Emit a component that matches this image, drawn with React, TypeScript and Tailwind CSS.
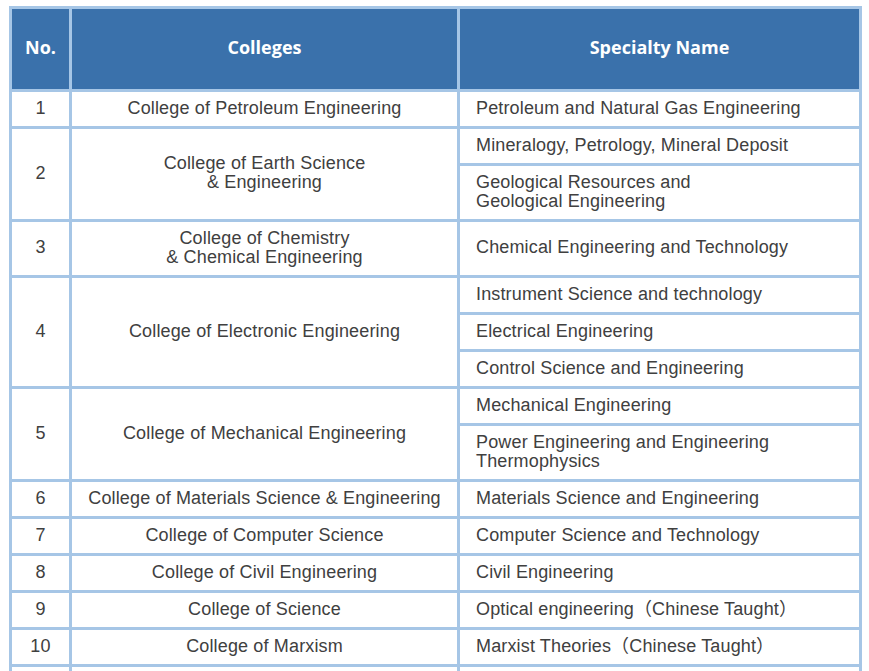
import React from "react";

type Row = { no: string; college: string[]; specs: { lines: string[]; h: number }[] };

const rows: Row[] = [
  { no: "1", college: ["College of Petroleum Engineering"], specs: [{ lines: ["Petroleum and Natural Gas Engineering"], h: 37 }] },
  {
    no: "2",
    college: ["College of Earth Science", "& Engineering"],
    specs: [
      { lines: ["Mineralogy, Petrology, Mineral Deposit"], h: 37 },
      { lines: ["Geological Resources and", "Geological Engineering"], h: 56 },
    ],
  },
  { no: "3", college: ["College of Chemistry", "& Chemical Engineering"], specs: [{ lines: ["Chemical Engineering and Technology"], h: 56 }] },
  {
    no: "4",
    college: ["College of Electronic Engineering"],
    specs: [
      { lines: ["Instrument Science and technology"], h: 37 },
      { lines: ["Electrical Engineering"], h: 37 },
      { lines: ["Control Science and Engineering"], h: 37 },
    ],
  },
  {
    no: "5",
    college: ["College of Mechanical Engineering"],
    specs: [
      { lines: ["Mechanical Engineering"], h: 37 },
      { lines: ["Power Engineering and Engineering", "Thermophysics"], h: 56 },
    ],
  },
  { no: "6", college: ["College of Materials Science & Engineering"], specs: [{ lines: ["Materials Science and Engineering"], h: 37 }] },
  { no: "7", college: ["College of Computer Science"], specs: [{ lines: ["Computer Science and Technology"], h: 37 }] },
  { no: "8", college: ["College of Civil Engineering"], specs: [{ lines: ["Civil Engineering"], h: 37 }] },
  { no: "9", college: ["College of Science"], specs: [{ lines: ["Optical engineering（Chinese Taught）"], h: 37 }] },
  { no: "10", college: ["College of Marxism"], specs: [{ lines: ["Marxist Theories（Chinese Taught）"], h: 37 }] },
  { no: "", college: [""], specs: [{ lines: [""], h: 37 }] },
];

const cell = "border-[3px] border-[#a6c6e6]";

export default function App() {
  return (
    <div className="min-h-screen bg-white pt-[6px] pl-[9px]">
      <table
        className="border-collapse table-fixed w-[850px] text-[18px] tracking-[0.15px] text-[#404040]"
        style={{ fontFamily: '"Liberation Sans", Arial, "Noto Sans CJK SC", sans-serif' }}
      >
        <colgroup>
          <col className="w-[60px]" />
          <col className="w-[388px]" />
          <col className="w-[402px]" />
        </colgroup>
        <thead>
          <tr
            className="h-[83px] bg-[#3a71ab] text-white font-bold text-[18px] tracking-normal"
            style={{ fontFamily: '"Open Sans", "Noto Sans", sans-serif' }}
          >
            <th className={`${cell} pb-[3px]`}>No.</th>
            <th className={`${cell} pb-[3px]`}>Colleges</th>
            <th className={`${cell} pb-[3px]`}>Specialty Name</th>
          </tr>
        </thead>
        <tbody>
          {rows.map((r, ri) =>
            r.specs.map((s, si) => (
              <tr key={`${ri}-${si}`} style={{ height: s.h }}>
                {si === 0 && (
                  <>
                    <td rowSpan={r.specs.length} className={`${cell} text-center pb-[2px]`}>
                      {r.no}
                    </td>
                    <td rowSpan={r.specs.length} className={`${cell} text-center leading-[19px] pb-[2px]`}>
                      {r.college.map((c, i) => (
                        <div key={i}>{c}</div>
                      ))}
                    </td>
                  </>
                )}
                <td className={`${cell} pl-[16px] leading-[19px] pb-[2px]`}>
                  {s.lines.map((l, i) => (
                    <div key={i}>{l}</div>
                  ))}
                </td>
              </tr>
            ))
          )}
        </tbody>
      </table>
    </div>
  );
}
